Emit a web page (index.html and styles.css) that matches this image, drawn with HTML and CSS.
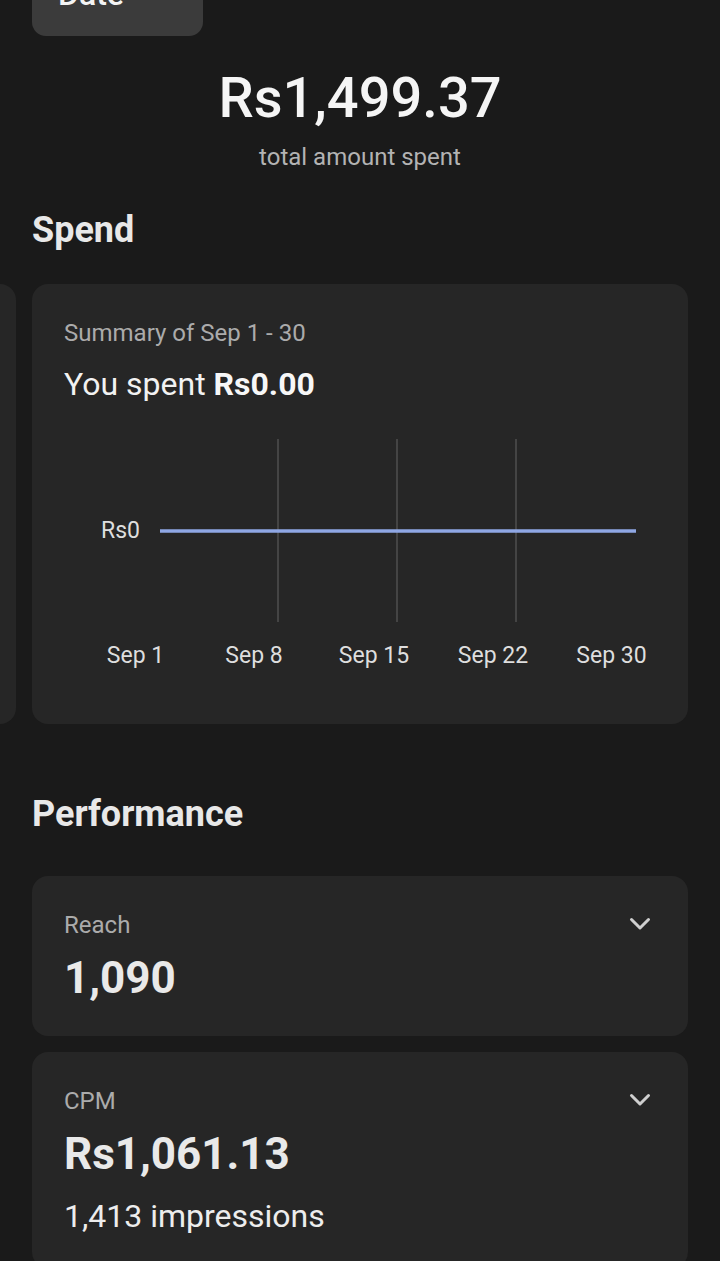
FILE: index.html
```html
<!DOCTYPE html>
<html lang="en">
<head>
<meta charset="utf-8">
<title>Ad spend</title>
<link rel="stylesheet" href="styles.css">
</head>
<body>
<main class="page">
  <div class="date-btn" role="button">Date</div>

  <section class="total">
    <div class="total-amount">Rs1,499.37</div>
    <div class="total-label">total amount spent</div>
  </section>

  <h2 class="section-title spend-title">Spend</h2>

  <div class="carousel">
    <div class="card peek"></div>
    <div class="card spend-card">
      <div class="muted-label">Summary of Sep 1 - 30</div>
      <div class="spent-line">You spent <b>Rs0.00</b></div>
      <svg class="chart" width="592" height="288" viewBox="0 0 592 288">
        <g stroke="#4f4f4f" stroke-width="1.5">
          <line x1="214" y1="35" x2="214" y2="218"/>
          <line x1="333" y1="35" x2="333" y2="218"/>
          <line x1="452" y1="35" x2="452" y2="218"/>
        </g>
        <line x1="96" y1="127" x2="572" y2="127" stroke="#8fa7e4" stroke-width="3.5"/>
        <text class="axis" x="76" y="134" text-anchor="end">Rs0</text>
        <g class="axis" text-anchor="middle">
          <text x="71.5" y="259">Sep 1</text>
          <text x="190" y="259">Sep 8</text>
          <text x="310" y="259">Sep 15</text>
          <text x="429" y="259">Sep 22</text>
          <text x="547.5" y="259">Sep 30</text>
        </g>
      </svg>
    </div>
  </div>

  <h2 class="section-title perf-title">Performance</h2>

  <div class="metrics">
    <div class="card metric">
      <div class="metric-head">
        <div class="muted-label">Reach</div>
        <svg class="chev" width="24" height="24" viewBox="0 0 24 24"><polyline points="3.5,6.5 12,15 20.5,6.5" fill="none" stroke="#cfcfcf" stroke-width="3" stroke-linecap="round" stroke-linejoin="round"/></svg>
      </div>
      <div class="metric-value">1,090</div>
    </div>
    <div class="card metric">
      <div class="metric-head">
        <div class="muted-label">CPM</div>
        <svg class="chev" width="24" height="24" viewBox="0 0 24 24"><polyline points="3.5,6.5 12,15 20.5,6.5" fill="none" stroke="#cfcfcf" stroke-width="3" stroke-linecap="round" stroke-linejoin="round"/></svg>
      </div>
      <div class="metric-value">Rs1,061.13</div>
      <div class="metric-sub">1,413 impressions</div>
    </div>
  </div>
</main>
</body>
</html>
```

FILE: styles.css
```css
* { box-sizing: border-box; }
html, body {
  margin: 0;
  padding: 0;
  background: #1a1a1a;
  overflow: hidden;
}
body {
  font-family: Roboto, "Liberation Sans", Arial, sans-serif;
  color: #ececec;
  height: 1261px;
}
.page {
  display: flex;
  flex-direction: column;
}
.date-btn {
  align-self: flex-start;
  margin: -24px 0 0 32px;
  width: 171px;
  height: 60px;
  padding: 0 0 0 26px;
  border-radius: 14px;
  background: #3b3b3b;
  color: #f4f4f4;
  font-size: 32px;
  line-height: 36px;
  font-weight: 500;
}
.total {
  margin-top: 28px;
  text-align: center;
}
.total-amount {
  font-size: 56px;
  line-height: 68px;
  font-weight: 500;
  color: #f5f5f5;
}
.total-label {
  margin-top: 9px;
  font-size: 24px;
  line-height: 32px;
  color: #b3b3b3;
}
.section-title {
  margin: 0;
  padding-left: 32px;
  font-size: 36px;
  line-height: 44px;
  font-weight: 700;
  color: #e8e8e8;
}
.spend-title { margin-top: 35px; }
.carousel {
  margin-top: 32px;
  display: flex;
  gap: 16px;
}
.card {
  background: #262626;
  border-radius: 16px;
}
.peek {
  width: 16px;
  border-radius: 0 16px 16px 0;
}
.spend-card {
  width: 656px;
  padding: 33px 32px 32px;
  display: flex;
  flex-direction: column;
}
.muted-label {
  font-size: 24px;
  line-height: 32px;
  color: #ababab;
}
.spent-line {
  margin-top: 15px;
  font-size: 32px;
  line-height: 40px;
  color: #f2f2f2;
}
.spent-line b { font-weight: 700; color: #f7f7f7; }
.chart { display: block; }
.axis {
  font-family: Roboto, "Liberation Sans", Arial, sans-serif;
  font-size: 23px;
  fill: #dedede;
}
.perf-title { margin-top: 68px; }
.metrics {
  margin: 40px 32px 0;
  display: flex;
  flex-direction: column;
  gap: 16px;
}
.metric {
  padding: 33px 32px 32px;
}
.metric-head {
  display: flex;
  justify-content: space-between;
  align-items: center;
}
.chev {
  display: block;
  margin-right: 4px;
}
.metric-value {
  margin-top: 11px;
  font-size: 44px;
  line-height: 52px;
  font-weight: 700;
  color: #e9e9e9;
}
.metric-sub {
  margin-top: 16px;
  font-size: 32px;
  line-height: 40px;
  color: #ededed;
}
```
